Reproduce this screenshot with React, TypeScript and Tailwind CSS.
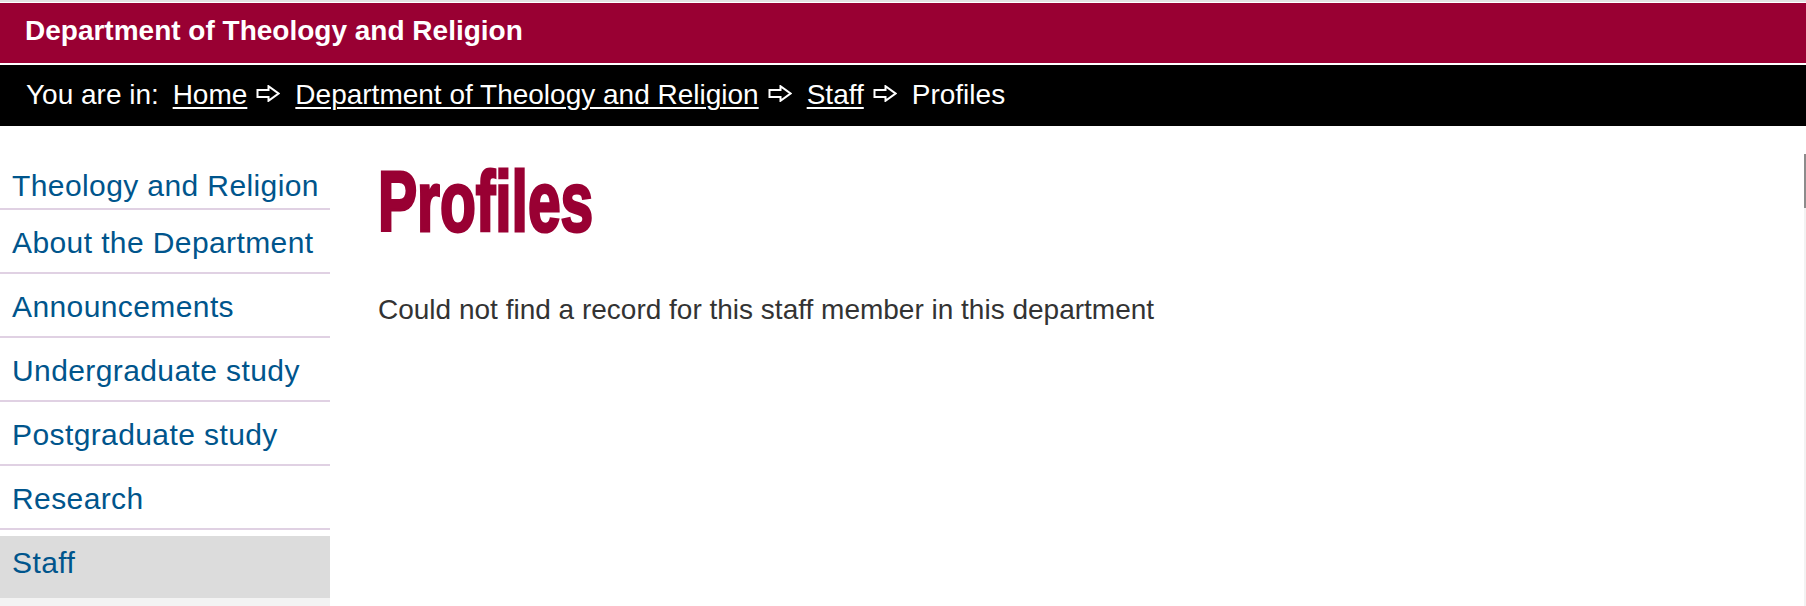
const crumbs = [
  { label: 'Home', href: '#' },
  { label: 'Department of Theology and Religion', href: '#' },
  { label: 'Staff', href: '#' },
];

const menu = [
  'About the Department',
  'Announcements',
  'Undergraduate study',
  'Postgraduate study',
  'Research',
];

const Arrow = () => (
  <svg
    className="self-start mt-[4px] ml-[9px] mr-[15px] shrink-0"
    width="24"
    height="17"
    viewBox="0 0 24 17"
    fill="none"
  >
    <path
      d="M1.5 5H12.5V1.2L22.5 8.5L12.5 15.8V12H1.5Z"
      stroke="white"
      strokeWidth="2"
      strokeLinejoin="miter"
    />
  </svg>
);

export default function App() {
  return (
    <div className="relative w-[1806px] h-[606px] overflow-hidden bg-white font-['Liberation_Sans',Arial,sans-serif]">
      <div className="h-[2px] bg-[#e2e2e2]" />
      <div className="h-[1px] bg-white" />

      <header className="h-[60px] bg-[#990033] pl-[25px] pt-[14px]">
        <h1 className="text-[28px] leading-[28px] font-bold text-white">
          Department of Theology and Religion
        </h1>
      </header>
      <div className="h-[2px] bg-white" />

      <nav className="h-[61px] bg-black pl-[26px] pt-[16px]">
        <div className="flex items-baseline text-[28px] leading-[28px] text-white whitespace-pre">
          <span className="mr-[6px]">You are in: </span>
          {crumbs.map((c) => (
            <span key={c.label} className="flex items-baseline">
              <a href={c.href} className="underline decoration-2 underline-offset-[3px]">
                {c.label}
              </a>
              <Arrow />
            </span>
          ))}
          <span>Profiles</span>
        </div>
      </nav>

      <div className="flex">
        <aside className="w-[330px] shrink-0 text-[30px] leading-[34px] tracking-[0.4px] text-[#00558c]">
          <ul>
            <li className="border-b-2 border-[#e0d1e3] pl-[12px] pt-[43px] pb-[5px]">
              <a href="#">Theology and Religion</a>
            </li>
            {menu.map((m) => (
              <li key={m} className="border-b-2 border-[#e0d1e3] pl-[12px] pt-[16px] pb-[12px]">
                <a href="#">{m}</a>
              </li>
            ))}
            <li className="pt-[6px]">
              <a href="#" className="block bg-[#dcdcdc] pl-[12px] pt-[10px] pb-[18px]">
                Staff
              </a>
              <div className="h-[40px] bg-[#f3f3f3]" />
            </li>
          </ul>
        </aside>

        <main className="ml-[48px]">
          <h2 className="mt-[33px] inline-block origin-left scale-x-[0.69] text-[85px] leading-[85px] font-bold text-[#990033] [-webkit-text-stroke:3px_#990033]">
            Profiles
          </h2>
          <p className="mt-[46px] text-[28px] leading-[40px] text-[#333333]">
            Could not find a record for this staff member in this department
          </p>
        </main>
      </div>

      <div className="absolute right-0 top-[154px] w-[2px] h-[54px] bg-[#8c8c8c]" />
      <div className="absolute right-0 top-[208px] bottom-0 w-[2px] bg-[#f2f2f2]" />
    </div>
  );
}
